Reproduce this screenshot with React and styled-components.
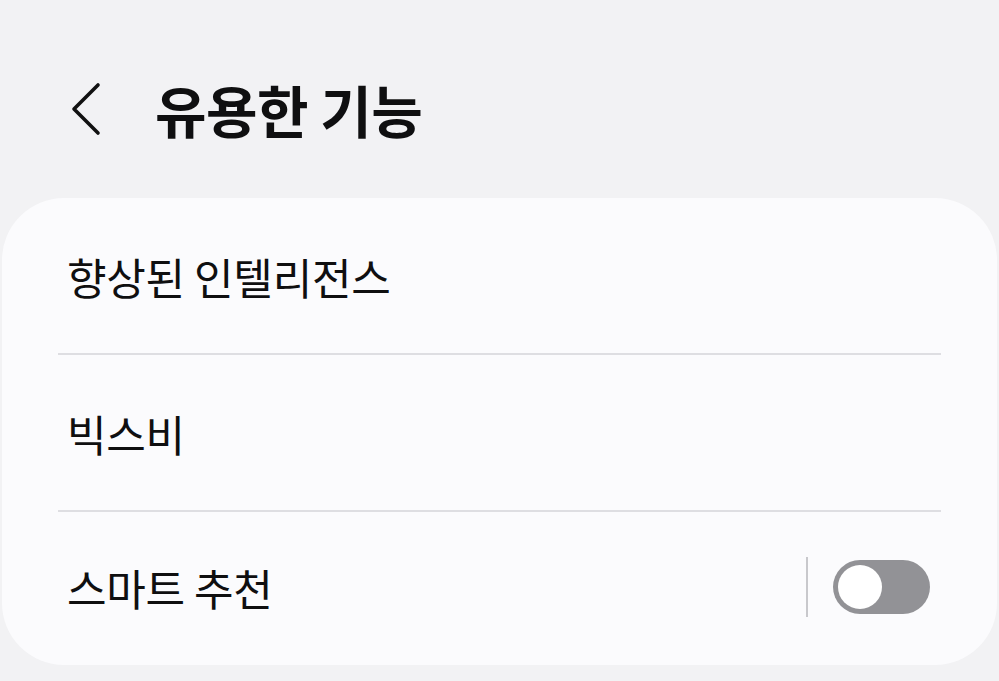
import React from 'react';
import styled, { createGlobalStyle } from 'styled-components';

const GlobalStyle = createGlobalStyle`
  html, body {
    margin: 0;
    padding: 0;
    background: #f2f2f4;
  }
  body {
    font-family: "Noto Sans CJK KR", "Noto Sans", sans-serif;
    color: #0f0f10;
  }
`

const Page = styled.div`
  width: 999px;
  height: 681px;
  overflow: hidden;
  background: #f2f2f4;
`

const Header = styled.div`
  height: 198px;
  display: flex;
  align-items: center;
  padding-left: 68px;
  padding-top: 20px;
  box-sizing: border-box;
`

const BackButton = styled.div`
  width: 36px;
  height: 56px;
  display: flex;
  align-items: center;
  margin-right: 51px;
`

const Title = styled.h1`
  margin: 0;
  font-size: 56px;
  font-weight: 700;
  letter-spacing: -0.5px;
  line-height: 1;
`

const Card = styled.div`
  margin: 0 2px;
  height: 467px;
  background: #fbfbfd;
  border-radius: 62px;
  padding: 0 56px;
  box-sizing: border-box;
  display: flex;
  flex-direction: column;
`

const Row = styled.div`
  height: ${p => p.$h}px;
  display: flex;
  align-items: center;
  justify-content: space-between;
  padding: 0 10px 0 9px;
  border-bottom: ${p => (p.$last ? 'none' : '2px solid #dedee2')};
  box-sizing: border-box;
`

const Label = styled.span`
  font-size: 43px;
  font-weight: 400;
  letter-spacing: -0.3px;
`

const SwitchArea = styled.div`
  display: flex;
  align-items: center;
  gap: 25px;
  margin-right: 1px;
`

const Divider = styled.div`
  width: 2px;
  height: 60px;
  background: #c8c8cc;
`

const Track = styled.div`
  width: 97px;
  height: 54px;
  border-radius: 27px;
  background: #929296;
  display: flex;
  align-items: center;
  padding-left: 5px;
  box-sizing: border-box;
`

const Knob = styled.div`
  width: 44px;
  height: 44px;
  border-radius: 50%;
  background: #ffffff;
`

export default function App() {
  return (
    <Page>
      <GlobalStyle />
      <Header>
        <BackButton>
          <svg width="36" height="56" viewBox="0 0 36 56" fill="none">
            <path d="M30 4 L6 28 L30 52" stroke="#111" strokeWidth="3.6" strokeLinecap="round" strokeLinejoin="round" />
          </svg>
        </BackButton>
        <Title>유용한 기능</Title>
      </Header>
      <Card>
        <Row $h={157}>
          <Label>향상된 인텔리전스</Label>
        </Row>
        <Row $h={157}>
          <Label>빅스비</Label>
        </Row>
        <Row $h={150} $last>
          <Label>스마트 추천</Label>
          <SwitchArea>
            <Divider />
            <Track>
              <Knob />
            </Track>
          </SwitchArea>
        </Row>
      </Card>
    </Page>
  );
}
